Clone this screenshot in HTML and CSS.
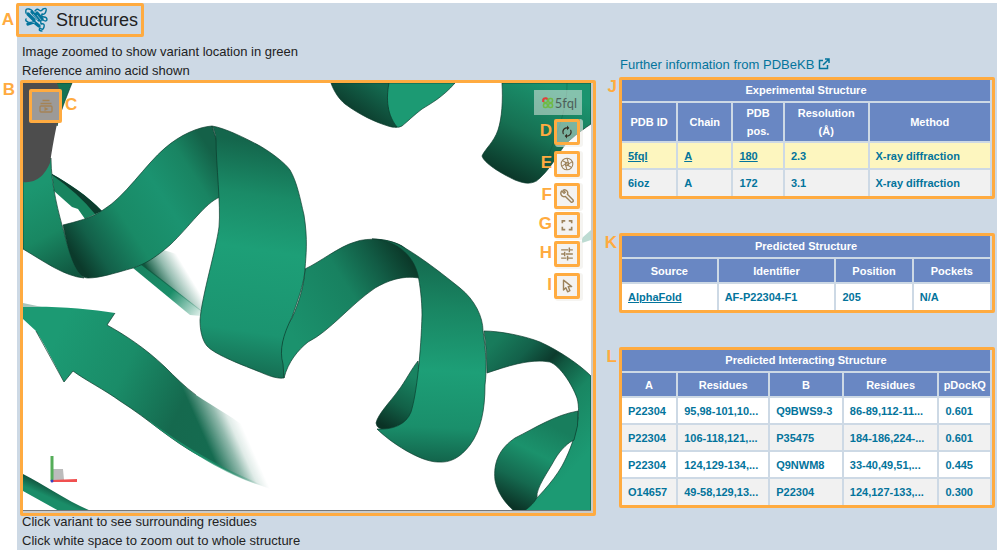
FILE: index.html
```html
<!DOCTYPE html>
<html lang="en">
<head>
<meta charset="utf-8">
<title>Structures</title>
<link rel="stylesheet" href="styles.css">
</head>
<body>
<main class="panel">
  <section class="structure">
    <div class="callout heading">
      <span class="tag tag-outer">A</span>
      <svg class="protein" viewBox="0 0 24 26" aria-hidden="true">
        <g fill="none" stroke="#03749c" stroke-linecap="round" stroke-linejoin="round">
          <path stroke-width="1.4" d="M1 6Q0 1 4 2T7 5M1 12Q0 14 3 15M10 4Q12 1 14 3T18 2Q22 0 21 4T17 7Q16 10 19 10T22 13Q21 15 18 13T16 17Q20 16 19 20T15 21Q13 24 17 24"/>
          <path stroke-width="3.4" d="M3 7L9 13M7 5L14 13M12 6L17 12M3 17L9 15L14 19"/>
        </g>
        <path d="M5 14l5 2M8 7l5 6M12 8l4 5" stroke="#cdd9e5" stroke-width=".6"/>
      </svg>
      <h1>Structures</h1>
    </div>
    <p class="note">Image zoomed to show variant location in green<br>Reference amino acid shown</p>
    <div class="callout viewer">
      <span class="tag tag-outer">B</span>
      <svg class="scene" viewBox="23 83 568 428" preserveAspectRatio="xMidYMid slice" role="img" aria-label="Protein ribbon model">
        <defs>
          <linearGradient id="g1" gradientUnits="userSpaceOnUse" x1="30" y1="190" x2="75" y2="275"><stop offset="0" stop-color="#1c9670"/><stop offset=".5" stop-color="#198762"/><stop offset="1" stop-color="#10553f"/></linearGradient>
          <linearGradient id="g2" gradientUnits="userSpaceOnUse" x1="78" y1="262" x2="222" y2="168"><stop offset="0" stop-color="#0b3a2b"/><stop offset=".13" stop-color="#136049"/><stop offset=".36" stop-color="#198a66"/><stop offset=".62" stop-color="#1b9370"/><stop offset=".84" stop-color="#198462"/><stop offset="1" stop-color="#146148"/></linearGradient>
          <linearGradient id="g3" gradientUnits="userSpaceOnUse" x1="275" y1="145" x2="240" y2="378"><stop offset="0" stop-color="#14664c"/><stop offset=".22" stop-color="#1a8b67"/><stop offset=".45" stop-color="#1d9f77"/><stop offset=".8" stop-color="#1b9470"/><stop offset="1" stop-color="#15694f"/></linearGradient>
          <linearGradient id="g4" gradientUnits="userSpaceOnUse" x1="295" y1="340" x2="418" y2="262"><stop offset="0" stop-color="#1b926d"/><stop offset=".5" stop-color="#188160"/><stop offset=".75" stop-color="#125c45"/><stop offset="1" stop-color="#0a3224"/></linearGradient>
          <linearGradient id="g5" gradientUnits="userSpaceOnUse" x1="440" y1="255" x2="430" y2="465"><stop offset="0" stop-color="#14694e"/><stop offset=".25" stop-color="#198562"/><stop offset=".55" stop-color="#1d9f77"/><stop offset=".82" stop-color="#1a8f6b"/><stop offset="1" stop-color="#126048"/></linearGradient>
          <linearGradient id="g6" gradientUnits="userSpaceOnUse" x1="410" y1="375" x2="382" y2="425"><stop offset="0" stop-color="#198361"/><stop offset=".55" stop-color="#126047"/><stop offset="1" stop-color="#0a3225"/></linearGradient>
          <linearGradient id="g7" gradientUnits="userSpaceOnUse" x1="487" y1="350" x2="591" y2="450"><stop offset="0" stop-color="#187b5b"/><stop offset=".2" stop-color="#13614a"/><stop offset=".36" stop-color="#0c3b2d"/><stop offset=".44" stop-color="#115740"/><stop offset=".65" stop-color="#198662"/><stop offset="1" stop-color="#1c9a73"/></linearGradient>
          <linearGradient id="g8" gradientUnits="userSpaceOnUse" x1="560" y1="430" x2="520" y2="510"><stop offset="0" stop-color="#187e5d"/><stop offset=".35" stop-color="#1b926c"/><stop offset=".7" stop-color="#15694f"/><stop offset="1" stop-color="#0b3427"/></linearGradient>
          <linearGradient id="g9" gradientUnits="userSpaceOnUse" x1="375" y1="83" x2="350" y2="120"><stop offset="0" stop-color="#14694f"/><stop offset="1" stop-color="#0b3326"/></linearGradient>
          <linearGradient id="g10" gradientUnits="userSpaceOnUse" x1="560" y1="90" x2="515" y2="184"><stop offset="0" stop-color="#1b946f"/><stop offset=".5" stop-color="#167052"/><stop offset="1" stop-color="#0a3326"/></linearGradient>
          <linearGradient id="g11" gradientUnits="userSpaceOnUse" x1="60" y1="330" x2="230" y2="415"><stop offset="0" stop-color="#1c9a73"/><stop offset=".4" stop-color="#1a8c68"/><stop offset=".75" stop-color="#15694e"/><stop offset="1" stop-color="#156b50"/></linearGradient>
          <linearGradient id="fade" gradientUnits="userSpaceOnUse" x1="204" y1="437" x2="240" y2="421"><stop offset="0" stop-color="#fff"/><stop offset=".5" stop-color="#777"/><stop offset=".75" stop-color="#222"/><stop offset="1" stop-color="#000"/></linearGradient>
          <mask id="distance"><path fill="url(#fade)" d="M23 290H290V511H23Z"/></mask>
          <linearGradient id="g12" gradientUnits="userSpaceOnUse" x1="152" y1="277" x2="180" y2="260"><stop offset="0" stop-color="#11573f"/><stop offset=".5" stop-color="#156b50" stop-opacity=".45"/><stop offset="1" stop-color="#156b50" stop-opacity="0"/></linearGradient>
          <linearGradient id="g13" gradientUnits="userSpaceOnUse" x1="140" y1="272" x2="198" y2="318"><stop offset="0" stop-color="#188461"/><stop offset=".5" stop-color="#1a8d68"/><stop offset="1" stop-color="#1a8d68" stop-opacity=".15"/></linearGradient>
          <linearGradient id="g14" gradientUnits="userSpaceOnUse" x1="60" y1="483" x2="50" y2="506"><stop offset="0" stop-color="#0a2f23"/><stop offset=".7" stop-color="#1a8d68"/></linearGradient>
          <linearGradient id="g15" gradientUnits="userSpaceOnUse" x1="201" y1="450" x2="262" y2="485"><stop offset="0" stop-color="#1b8e69"/><stop offset="1" stop-color="#1b8e69" stop-opacity="0"/></linearGradient>
        </defs>
        <rect x="23" y="83" width="568" height="428" fill="#fff"/>
        <path fill="url(#g13)" d="M133 268L142 264L202 311L201 316L190 315Z"/>
        <path fill="url(#g12)" d="M140 264L160 249L190 258L212 290L202 312Z"/>
        <path fill="#18845f" d="M52 174C68 183 88 196 102 211L85 219L78 209L72 207L54 191Z"/>
        <path fill="#0c3c2d" d="M52 174C68 183 88 196 102 211L95 214Q78 193 52 175Z"/>
        <g stroke="#0b3a2b" stroke-opacity=".75" stroke-width=".9" stroke-linejoin="round">
          <path fill="url(#g2)" d="M63 225C75 222 92 218 103 210C125 197 145 165 165 148C180 135 198 127 212 126L218 145L220 197C205 203 190 226 170 245C155 258 145 264 133 268C115 273 100 278 88 278C78 278 72 262 68 248Z"/>
          <path fill="url(#g1)" d="M23 178L51 158C51 185 59 215 64 232C69 252 74 270 84 278C64 276 45 262 23 249Z"/>
          <path fill="#167354" d="M55 83H72C66 98 60 113 57 126Z"/>
          <path fill="#4d4d4d" stroke="none" d="M23 83H57Q61 92 60 105L57 124C52 148 51 158 50 163Q41 184 23 182Z"/>
          <path fill="url(#g4)" d="M305 269C320 262 340 246 355 242C368 237 390 239 402 246C412 253 418 265 419 278C402 275 387 281 375 288C350 305 330 331 308 342C298 350 288 362 284 378C278 360 280 335 292 318C300 300 304 285 305 269Z"/>
          <path fill="url(#g3)" d="M212 126C225 128 245 138 260 146C272 153 285 163 290 170C297 182 300 198 304 215C308 240 306 255 305 269C304 285 297 302 292 317C283 335 279 350 283 364L284 378C276 379 267 375 260 372C245 366 215 355 207 346C202 340 200 330 200 320C202 295 216 250 219 227C221 205 216 165 216 139Q215 130 212 126Z"/>
          <path fill="url(#g6)" d="M418 361C412 368 405 382 398 391C390 402 378 414 376 423Q377 431 390 429L412 420L420 380Z"/>
          <path fill="url(#g5)" d="M372 239C386 239 398 243 405 248C425 260 445 276 460 288C475 300 483 317 483 331C486 350 487 370 485 385C485 410 481 430 470 445C460 458 450 463 438 462C420 462 390 442 377 429C392 430 406 425 411 412C417 393 421 350 422 315C422 300 420 285 418 275C413 254 395 240 372 239Z"/>
          <path fill="url(#g7)" d="M484 331C500 331 525 336 540 342C560 351 580 365 591 376V511H523C535 501 553 482 562 466C574 444 582 415 577 398C572 384 560 366 550 362C530 358 505 367 487 373Q487 350 484 331Z"/>
          <path fill="url(#g8)" d="M578 411C555 415 535 428 515 438C500 448 493 462 495 480C497 492 505 503 514 511H524C530 507 535 502 537 497C536 488 548 472 555 459C561 449 569 442 574 440Q579 426 578 411Z"/>
          <path fill="#1c9a73" d="M388 83H455C443 97 430 104 422 109C414 115 407 122 402 126Q399 128 395 127C385 112 387 94 388 83Z"/>
          <path fill="url(#g9)" d="M331 83C334 92 340 100 345 104C360 115 375 122 388 126Q393 128 397 127C385 112 387 94 389 83Z"/>
          <path fill="url(#g10)" d="M502 83C503 100 502 118 498 130C494 142 485 149 482 156C484 163 500 173 515 180C525 184 533 185 540 178C555 164 560 148 570 140C578 133 585 128 591 124V83Z"/>
        </g>
        <path d="M567 83Q568 118 536 182" fill="none" stroke="#0e4a36" stroke-opacity=".3"/>
        <g mask="url(#distance)">
          <path fill="url(#g11)" d="M23 307C55 306 90 309 115 313L107 325C125 335 145 348 165 367C175 377 185 387 196 395C215 408 240 420 260 440L275 490C245 482 225 470 200 456C170 440 150 420 120 401C105 390 85 380 73 371L64 382C55 365 45 345 36 331L23 319Z"/>
          <path d="M115 313l-8 12M73 371l-9 11L36 331M107 325C125 335 145 348 165 367C175 377 185 387 196 395M73 371C85 380 105 390 120 401C150 420 170 440 200 456" fill="none" stroke="#0b3a2b" stroke-opacity=".7"/>
        </g>
        <path fill="url(#g15)" d="M150 421C175 440 215 466 265 486C240 482 192 455 150 422Z"/>
        <path fill="#a9c4bb" d="M23 303L42 307H23Z"/>
        <path fill="url(#g14)" d="M23 474C45 485 67 501 91 511H59L23 491Z"/>
        <path fill="#bddbd2" d="M582 238L591 230V240L582 243Z"/>
        <path fill="#bcbcbc" d="M53 469H63L64 480H53Z"/>
        <path stroke="#55ad59" stroke-width="3" d="M52 456V481"/>
        <path fill="#f05050" d="M52 480L77 479V482L52 482Z"/>
        <circle cx="52" cy="481" r="1.5" fill="#3440c0"/>
        <path stroke="#777" d="M23 510.500H591"/>
      </svg>
      <div class="callout snapshots">
        <button type="button" aria-label="Animation">
          <svg class="stack" viewBox="0 0 14 14"><g fill="none" stroke="#a58355" stroke-width="1.300"><path d="M3.500 1.500h7M1.500 4.500h11"/><rect x="1" y="7" width="12" height="6" rx="1"/></g><path fill="#a58355" d="M5.500 8v4l4-2z"/></svg>
        </button>
        <span class="tag tag-after">C</span>
      </div>
      <a class="entry" href="#entry">
        <svg viewBox="0 0 12 12" aria-hidden="true"><g fill="none" stroke="#6fba46" stroke-width="1.600"><rect x="1.500" y="1.500" width="4" height="4" rx="1.500"/><rect x="6.500" y="1.500" width="4" height="4" rx="1.500"/><rect x="1.500" y="6.500" width="4" height="4" rx="1.500"/><rect x="6.500" y="6.500" width="4" height="4" rx="1.500"/></g><path d="M1.200 5V2.500Q1.500 1 4 1.200L5.500 2" fill="none" stroke="#e33c3c" stroke-width="2"/></svg>5fql
      </a>
      <div class="tools">
        <div class="callout tool tool-clear"><span class="tag">D</span><button type="button" aria-label="Reset"><svg viewBox="0 0 24 24"><path fill="#332b1f" d="M12 6v3l4-4-4-4v3c-4.420 0-8 3.580-8 8 0 1.570.460 3.030 1.240 4.260L6.700 14.800A5.870 5.870 0 0 1 6 12c0-3.310 2.690-6 6-6zm6.760 1.740L17.300 9.200c.440.840.700 1.790.700 2.800 0 3.310-2.690 6-6 6v-3l-4 4 4 4v-3c4.420 0 8-3.580 8-8 0-1.570-.460-3.030-1.240-4.260z"/></svg></button></div>
        <div class="callout tool"><span class="tag">E</span><button type="button" aria-label="Screenshot"><svg viewBox="0 0 24 24"><g fill="none" stroke="#9c825b" stroke-width="1.800"><circle cx="12" cy="12" r="10"/><circle cx="12" cy="12" r="3"/><path d="M12 2l3 10M21 8l-9 6M20 18l-9-5M12 22L9 12M3 16l9-6M4 6l9 5"/></g></svg></button></div>
        <div class="tool-group">
          <div class="callout tool"><span class="tag">F</span><button type="button" aria-label="Controls"><svg viewBox="0 0 24 24"><path fill="none" stroke="#9c825b" stroke-width="2.400" stroke-linejoin="round" d="M3 3.500L7 7.500 9 5.500 5.500 2C8.500 0.500 12 2 13 5c.5 1.500.3 3-.3 4.200L22 18.500Q23.500 20.500 22 22T18.500 22L9.200 12.700C6 14 3 12.500 2 10C1 7.500 1.500 5 3 3.500Z"/></svg></button></div>
          <div class="callout tool"><span class="tag">G</span><button type="button" aria-label="Full screen"><svg viewBox="0 0 24 24"><path fill="none" stroke="#9c825b" stroke-width="2.800" d="M4 9V5h5M15 5h5v4M20 15v5h-5M9 20H4v-5"/></svg></button></div>
          <div class="callout tool"><span class="tag">H</span><button type="button" aria-label="Settings"><svg viewBox="0 0 24 24"><path fill="none" stroke="#9c825b" stroke-width="2.400" d="M2 5h12M16 5h6M16 1v8M2 12h5M10 12h12M8 8v8M2 19h9M14 19h8M13 15v8"/></svg></button></div>
        </div>
        <div class="callout tool"><span class="tag">I</span><button type="button" aria-label="Selection mode"><svg viewBox="0 0 24 24"><path fill="none" stroke="#9c825b" stroke-width="2.400" stroke-linejoin="round" d="M6 2v17l4-4 3 7 4-2-3-7h6z"/></svg></button></div>
      </div>
    </div>
    <p class="note note-after">Click variant to see surrounding residues<br>Click white space to zoom out to whole structure</p>
  </section>

  <section class="data">
    <a class="more" href="#pdbekb">Further information from PDBeKB
      <svg viewBox="0 0 12 12" aria-hidden="true"><path fill="none" stroke="#03749c" stroke-width="1.500" d="M5 2.500H1.500v8h8V7M7 1h4v4M11 1L5 7"/></svg></a>
    <div class="callout sheet">
      <span class="tag tag-outer">J</span>
      <table>
        <colgroup><col class="w15"><col class="w15"><col class="w14"><col class="w23"><col class="w33"></colgroup>
        <thead>
          <tr class="title"><th colspan="5">Experimental Structure</th></tr>
          <tr class="tall"><th>PDB ID</th><th>Chain</th><th>PDB pos.</th><th>Resolution (Å)</th><th>Method</th></tr>
        </thead>
        <tbody>
          <tr class="selected"><td><a href="#5fql">5fql</a></td><td><a href="#chain">A</a></td><td><a href="#pos">180</a></td><td>2.3</td><td>X-ray diffraction</td></tr>
          <tr><td>6ioz</td><td>A</td><td>172</td><td>3.1</td><td>X-ray diffraction</td></tr>
        </tbody>
      </table>
    </div>
    <div class="callout sheet">
      <span class="tag tag-outer">K</span>
      <table>
        <colgroup><col class="w26"><col class="w32"><col class="w21"><col class="w21"></colgroup>
        <thead>
          <tr class="title"><th colspan="4">Predicted Structure</th></tr>
          <tr><th>Source</th><th>Identifier</th><th>Position</th><th>Pockets</th></tr>
        </thead>
        <tbody>
          <tr><td><a href="#alphafold">AlphaFold</a></td><td>AF-P22304-F1</td><td>205</td><td>N/A</td></tr>
        </tbody>
      </table>
    </div>
    <div class="callout sheet">
      <span class="tag tag-outer">L</span>
      <table>
        <colgroup><col class="w15"><col class="w25"><col class="w20"><col class="w26"><col class="w14"></colgroup>
        <thead>
          <tr class="title"><th colspan="5">Predicted Interacting Structure</th></tr>
          <tr><th>A</th><th>Residues</th><th>B</th><th>Residues</th><th>pDockQ</th></tr>
        </thead>
        <tbody>
          <tr><td>P22304</td><td>95,98-101,10...</td><td>Q9BWS9-3</td><td>86-89,112-11...</td><td>0.601</td></tr>
          <tr><td>P22304</td><td>106-118,121,...</td><td>P35475</td><td>184-186,224-...</td><td>0.601</td></tr>
          <tr><td>P22304</td><td>124,129-134,...</td><td>Q9NWM8</td><td>33-40,49,51,...</td><td>0.445</td></tr>
          <tr><td>O14657</td><td>49-58,129,13...</td><td>P22304</td><td>124,127-133,...</td><td>0.300</td></tr>
        </tbody>
      </table>
    </div>
  </section>
</main>
</body>
</html>
```
FILE: styles.css
```css
* { box-sizing: border-box; }

body {
  margin: 0;
  background: #fff;
  color: #222;
  font: 13px/20px "Liberation Sans", Arial, sans-serif;
}

.panel {
  display: grid;
  grid-template-columns: 576fr 376fr;
  gap: 23px;
  margin: 3px 1px 0 17px;
  padding: 0 2px 0 3px;
  background: #cdd9e5;
}

/* Orange call-out frames and their letters */
.callout {
  position: relative;
  border: 3px solid #ffab40;
  border-radius: 2px;
}

.tag {
  position: absolute;
  top: -3px;
  right: 100%;
  margin-right: 5px;
  color: #ffab40;
  font-size: 17px;
  font-weight: bold;
  line-height: 24px;
}

.tag-outer { top: -5px; }
.tag-after { top: 1px; right: auto; left: 100%; margin: 0 0 0 6px; }

.heading {
  display: flex;
  align-items: center;
  gap: 7px;
  width: max-content;
  height: 34px;
  margin: 0 0 5px -4px;
  padding: 0 3px 0 6px;
}

.heading .tag { top: 2px; }
.viewer > .tag-outer { margin-right: 8px; }
.protein { width: 24px; height: 26px; }

h1 {
  margin: 0;
  font-size: 18px;
  font-weight: normal;
  line-height: 24px;
}

.note { margin: 0; padding-left: 2px; line-height: 19px; }
.note-after { position: relative; margin-top: -4px; }

.viewer {
  aspect-ratio: 576 / 436;
  padding: 0 2px 2px 0;
  background: #cbcbc9;
}

.scene { display: block; width: 100%; height: 100%; }

.viewer button {
  display: flex;
  align-items: center;
  justify-content: center;
  width: 100%;
  height: 100%;
  margin: 0;
  padding: 0;
  border: 0;
  background: none;
}

.snapshots {
  position: absolute;
  top: 6px;
  left: 6px;
  width: 33px;
  height: 34px;
  background: #9c9a98;
}

.stack { width: 14px; height: 14px; }

.entry {
  position: absolute;
  top: 7px;
  right: 11px;
  display: flex;
  align-items: center;
  justify-content: flex-end;
  gap: 1px;
  width: 48px;
  height: 25px;
  padding-right: 5px;
  background: rgba(240, 240, 235, .5);
  color: #4d5f59;
  font: 13px/24px Lato, sans-serif;
  text-decoration: none;
}

.entry svg { width: 12px; height: 12px; }

.tools {
  position: absolute;
  top: 36px;
  right: 13px;
  display: flex;
  flex-direction: column;
  gap: 6px;
}

.tool-group { display: flex; flex-direction: column; gap: 3px; }

.tool {
  width: 26px;
  height: 26px;
  background: #f4f2f0;
  box-shadow: 2px 1px 0 1px rgba(238, 236, 232, .6);
}

.tool-clear { background: rgba(244, 242, 240, .45); }
.tool svg { width: 14px; height: 14px; }

.data { padding-top: 52px; }

.more {
  display: block;
  height: 22px;
  padding-left: 1px;
  color: #03749c;
  text-decoration: none;
}

.more svg { width: 12px; height: 12px; vertical-align: -1px; }

.sheet {
  margin-bottom: 34px;
  padding: 0 2px 0 0;
}

.sheet:last-child { margin-bottom: 0; }

table {
  width: 100%;
  border-collapse: collapse;
  border-style: hidden;
  table-layout: fixed;
  font-size: 11px;
  font-weight: bold;
  line-height: 18px;
}

th, td { border: 2px solid #cdd9e5; }

th {
  height: 25px;
  padding: 0;
  background: #6987c3;
  color: #fff;
}

.title th { height: 22px; padding-bottom: 2px; }
.tall th { height: 40px; padding: 0 8px; }
.tall th:first-child { padding: 0; }

td {
  height: 27px;
  padding: 0 0 0 6px;
  background: #fff;
  color: #03749c;
  white-space: nowrap;
}

td a { color: inherit; }
tbody tr:nth-child(even) td { background: #f1f1f1; }
tbody .selected td { background: #fdf6bf; }

.w14 { width: 14%; }
.w15 { width: 15%; }
.w20 { width: 20%; }
.w21 { width: 21%; }
.w23 { width: 23%; }
.w25 { width: 25%; }
.w26 { width: 26%; }
.w32 { width: 32%; }
.w33 { width: 33%; }
```
